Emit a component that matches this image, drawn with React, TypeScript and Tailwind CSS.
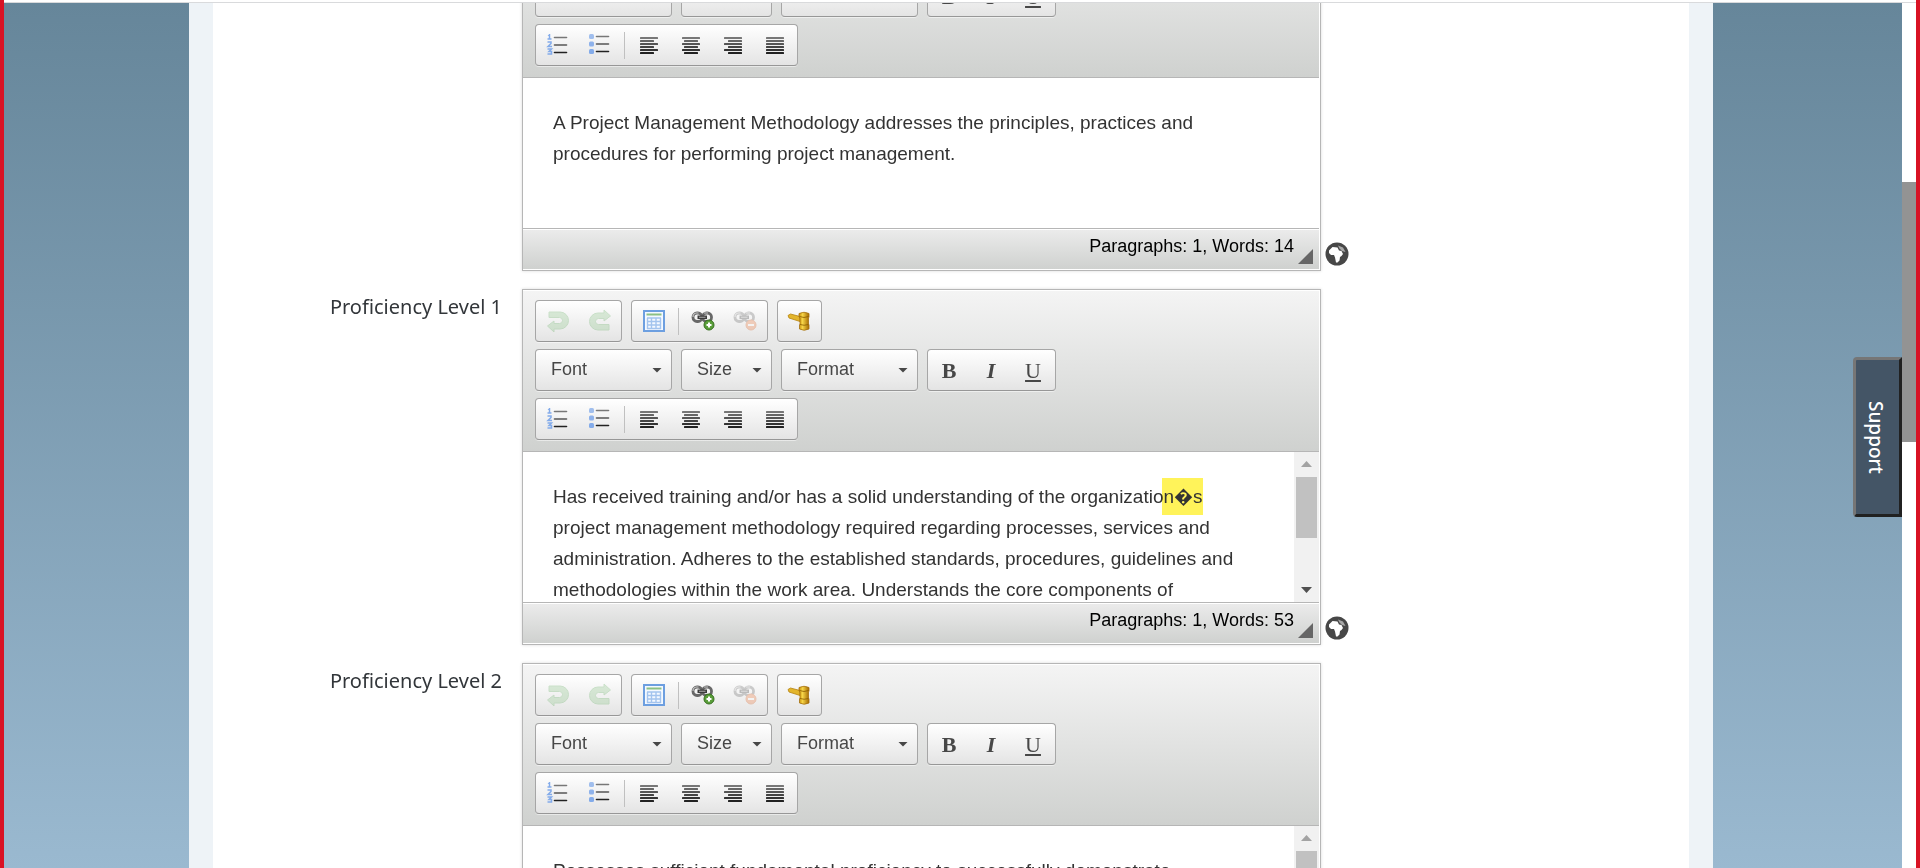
import React from 'react';

const GROUP = 'flex h-[42px] items-center rounded-[4px] border border-[#a6a6a6] border-b-[#979797] bg-gradient-to-b from-white to-[#e4e4e4] shadow-[0_1px_0_rgba(255,255,255,0.5)]';
const TRACK = 'relative flex w-[25px] shrink-0 flex-col items-center justify-between bg-[#f1f1f1] py-[9px]';

interface EditorProps {
  id: string;
  label?: string;
  words?: number;
  scroll?: boolean;
  children: React.ReactNode;
}

function ToolButton({ label, disabled, children }: { label: string; disabled?: boolean; children: React.ReactNode }) {
  return (
    <button type="button" aria-label={label} disabled={disabled} className="flex h-10 w-[42px] items-center justify-center disabled:opacity-30">
      {children}
    </button>
  );
}

function Separator() {
  return <span className="mx-[3px] h-[27px] w-px bg-[#c0c0c0]" />;
}

function Combo({ label, id, wide }: { label: string; id: string; wide?: boolean }) {
  return (
    <div className={`relative ${wide ? 'w-[137px]' : 'w-[91px]'}`}>
      <select
        id={id}
        aria-label={label}
        className="h-[42px] w-full appearance-none rounded-[4px] border border-[#a6a6a6] border-b-[#979797] bg-gradient-to-b from-white to-[#e4e4e4] pb-px pl-[15px] text-[18px] text-[#474747] shadow-[0_1px_0_rgba(255,255,255,0.5)]"
      >
        <option>{label}</option>
      </select>
      <svg className="pointer-events-none absolute right-[10px] top-[19px]" width="10" height="5" viewBox="0 0 10 5">
        <path d="M0.5 0h9L5 4.6z" fill="#474747" />
      </svg>
    </div>
  );
}

function UndoIcon({ flip }: { flip?: boolean }) {
  return (
    <svg width="24" height="24" viewBox="0 0 24 24">
      <g transform={flip ? 'translate(24 24) scale(-1 -1)' : undefined}>
        <path
          d={flip ? 'M3 21h11a8.500 8.500 0 0 0 0-17H8V1L1.500 7 8 12V9.500h5.500a3 3 0 0 1 0 6H3z' : 'M3 3h11a8.500 8.500 0 0 1 0 17H8v3l-6.500-6L8 12v2.500h5.500a3 3 0 0 0 0-6H3z'}
          transform={flip ? 'translate(0 24) scale(1 -1)' : undefined}
          fill="#8cc588"
          stroke="#62ab60"
        />
      </g>
    </svg>
  );
}

function TableIcon() {
  return (
    <svg width="24" height="24" viewBox="0 0 24 24">
      <rect x="2" y="2" width="20" height="20" fill="#f4f9ff" stroke="#6d9fe0" strokeWidth="2" />
      <path d="M4.500 5.500h15" stroke="#8cc084" strokeWidth="2" />
      <path d="M5 9h14M5 12.500h14M5 16h14M5 19.500h14M5.500 9v11M9.500 9v11M14 9v11M18.500 9v11" stroke="#a3c4ee" strokeWidth="1.400" fill="none" />
    </svg>
  );
}

function LinkIcon({ remove }: { remove?: boolean }) {
  return (
    <svg width="24" height="24" viewBox="0 0 24 24">
      <rect x="2" y="4" width="9" height="8.500" rx="4" fill="none" stroke="#686868" strokeWidth="2.800" />
      <rect x="11.500" y="4" width="9" height="8.500" rx="4" fill="none" stroke="#686868" strokeWidth="2.800" />
      <path d="M2 8a4 4 0 0 1 3.500-4h2M13 4h4" stroke="#c4c4c4" strokeWidth="1.200" fill="none" />
      <path d="M6.500 8.300h9.500" stroke="#3c3c3c" strokeWidth="3.600" />
      <path d="M8 8.300h6.500" stroke="#9a9a9a" strokeWidth="1.200" />
      <circle cx="18" cy="16" r="5" fill={remove ? '#ee7a3d' : '#5a9e3a'} stroke={remove ? '#d45a1c' : '#356f1e'} />
      <path d={remove ? 'M15 16h6' : 'M15.500 16h5M18 13.500v5'} stroke="#fff" strokeWidth="2" />
    </svg>
  );
}

function GavelIcon() {
  return (
    <svg width="24" height="24" viewBox="0 0 24 24">
      <defs>
        <linearGradient id="gavel" x1="0" x2="1">
          <stop offset="0" stopColor="#c98f08" />
          <stop offset="0.35" stopColor="#f6d548" />
          <stop offset="1" stopColor="#a56a00" />
        </linearGradient>
      </defs>
      <path d="M1 6.500L3.500 5l9.500 2.500v5L2 9z" fill="#e3b52c" stroke="#b58310" strokeWidth="0.800" />
      <path d="M12 4.500q5-2.500 10 0V8l-.5 1v6l.5 1v4q-5 2.500-9.500 0v-4l.5-1V9l-1-1z" fill="url(#gavel)" stroke="#a57010" strokeWidth="0.800" />
      <path d="M12.500 7.500q4.500 2 9 0M13 15.500q4 1.500 8.500 0" stroke="#8a5a00" strokeWidth="0.800" fill="none" />
    </svg>
  );
}

function ListIcon({ numbered }: { numbered?: boolean }) {
  return (
    <svg width="24" height="24" viewBox="0 0 24 24">
      {numbered ? (
        <path d="M3.500 1v5M2 2.500l1.500-1M1.500 6h4M1.500 9h3.500v1.500L2 13.500h4M1.500 16h4L3 18.500h2.500v2.500h-4" fill="none" stroke="#83abea" strokeWidth="1.500" />
      ) : (
        <g fill="#83abea">
          <rect x="1" y="1" width="5" height="5" rx="1.500" opacity=".75" />
          <rect x="1" y="8.500" width="5" height="5" rx="1.500" opacity=".9" />
          <rect x="1" y="16" width="5" height="5" rx="1.500" />
        </g>
      )}
      <g transform={numbered ? 'translate(0 1)' : undefined} strokeWidth="1.600" strokeLinecap="round">
        <path d="M8.500 3.500h12" stroke="#777" />
        <path d="M8.500 11h12" stroke="#555" />
        <path d="M8.500 18.500h12" stroke="#222" />
      </g>
    </svg>
  );
}

const SHADES = ['#777', '#666', '#555', '#444', '#333', '#222'];

function AlignIcon({ align }: { align: 'left' | 'center' | 'right' | 'justify' }) {
  return (
    <svg width="24" height="24" viewBox="0 0 24 24">
      {SHADES.map((shade, i) => {
        const width = align === 'justify' || i % 2 === 0 ? 18 : 14;
        const x = align === 'right' ? 21 - width : align === 'center' ? 12 - width / 2 : 3;
        return <rect key={shade} x={x} y={4 + i * 3} width={width} height="2" rx=".5" fill={shade} />;
      })}
    </svg>
  );
}

function GlobeIcon() {
  return (
    <svg width="24" height="24" viewBox="0 0 24 24">
      <circle cx="12" cy="12" r="11.500" fill="#474747" />
      <path d="M4 8.500L7.500 5l5 .500 1.500 3 2.500.500L18 12l-1.500 2-1.500 1-.5 3.500-2 2h-1.500L10 15.500 9 13H6l-2-2z" fill="#fff" />
      <path d="M13 3.500l5 2 2.500 4.500-3.500-1-2.500-2.500z" fill="#a9a9a9" />
    </svg>
  );
}

function Toolbar({ id }: { id: string }) {
  return (
    <div className="flex h-[161px] flex-col gap-[7px] border-t border-white bg-gradient-to-b from-[#f4f4f4] to-[#cfd1cf] pl-3 pt-[9px]">
      <div className="flex gap-[9px]">
        <div className={`${GROUP} pl-px`}>
          <ToolButton label="Undo" disabled><UndoIcon /></ToolButton>
          <ToolButton label="Redo" disabled><UndoIcon flip /></ToolButton>
        </div>
        <div className={`${GROUP} px-px`}>
          <ToolButton label="Table"><TableIcon /></ToolButton>
          <Separator />
          <ToolButton label="Link"><LinkIcon /></ToolButton>
          <ToolButton label="Unlink" disabled><LinkIcon remove /></ToolButton>
        </div>
        <div className={`${GROUP} pr-px`}>
          <ToolButton label="Legal scan"><GavelIcon /></ToolButton>
        </div>
      </div>
      <div className="flex gap-[9px]">
        <Combo id={`${id}-font`} label="Font" wide />
        <Combo id={`${id}-size`} label="Size" />
        <Combo id={`${id}-format`} label="Format" wide />
        <div className={`${GROUP} pr-px font-['Liberation_Serif',serif] text-[22px] text-[#474747]`}>
          <ToolButton label="Bold"><b>B</b></ToolButton>
          <ToolButton label="Italic"><b className="italic">I</b></ToolButton>
          <ToolButton label="Underline"><span className="underline decoration-2 underline-offset-2">U</span></ToolButton>
        </div>
      </div>
      <div className="flex">
        <div className={`${GROUP} px-px`}>
          <ToolButton label="Numbered list"><ListIcon numbered /></ToolButton>
          <ToolButton label="Bulleted list"><ListIcon /></ToolButton>
          <Separator />
          <ToolButton label="Align left"><AlignIcon align="left" /></ToolButton>
          <ToolButton label="Center"><AlignIcon align="center" /></ToolButton>
          <ToolButton label="Align right"><AlignIcon align="right" /></ToolButton>
          <ToolButton label="Justify"><AlignIcon align="justify" /></ToolButton>
        </div>
      </div>
    </div>
  );
}

function EditorRow({ id, label, words, scroll, children }: EditorProps) {
  return (
    <div className="flex">
      <span id={`${id}-label`} className="w-[289px] shrink-0 pt-1 text-right font-['Noto_Sans',sans-serif] text-[20px] leading-[28px] text-[#32363a]">
        {label}
      </span>
      <div className="ml-5 w-full max-w-[799px] border border-[#b6b6b6] bg-white pr-px shadow-[0_0_3px_rgba(0,0,0,0.15)]">
        <Toolbar id={id} />
        <div className="flex h-[152px] overflow-hidden border-y border-[#b6b6b6]">
          <div
            role="textbox"
            aria-multiline="true"
            aria-labelledby={label ? `${id}-label` : undefined}
            aria-label={label ? undefined : 'Description'}
            contentEditable
            suppressContentEditableWarning
            className="flex-1 px-[30px] pt-[29px] text-[19px] leading-[31px] text-[#333] outline-none"
          >
            {children}
          </div>
          {scroll && (
            <div className={TRACK}>
              <svg width="11" height="6" viewBox="0 0 11 6"><path d="M5.500 0L11 6H0z" fill="#a3a3a3" /></svg>
              <div className="absolute top-[25px] h-[61px] w-[21px] bg-[#c1c1c1]" />
              <svg width="11" height="6" viewBox="0 0 11 6"><path d="M0 0h11L5.500 6z" fill="#505050" /></svg>
            </div>
          )}
        </div>
        <div className="flex h-[41px] justify-end border-y border-white bg-gradient-to-b from-[#ebebeb] to-[#cfd1cf] pr-[6px]">
          <span className="pt-1 text-[18px] leading-6 text-black">Paragraphs: 1, Words: {words}</span>
          <svg className="ml-1 mt-[19px]" width="15" height="15" viewBox="0 0 15 15"><path d="M15 0v15H0z" fill="#666" /></svg>
        </div>
      </div>
      <button type="button" aria-label="Translations" className="mb-[5px] ml-1 shrink-0 self-end"><GlobeIcon /></button>
    </div>
  );
}

export default function App() {
  return (
    <div className="flex h-screen flex-col overflow-hidden border-x-4 border-[#d91224] bg-white font-['Liberation_Sans',Arial,sans-serif]">
      <div className="h-[3px] shrink-0 border-b border-[#d9dadc]" />
      <div className="flex min-h-0 flex-1">
        <div className="relative flex-1 bg-gradient-to-b from-[#66869a] to-[#9ab9d0] pl-[185px] pr-[189px]">
          <main className="h-full overflow-hidden border-x-[24px] border-[#eef3f7] bg-white">
            <div className="-mt-[88px] flex flex-col gap-[18px]">
              <EditorRow id="description" words={14}>
                A Project Management Methodology addresses the principles, practices and procedures for performing project management.
              </EditorRow>
              <EditorRow id="level-1" label="Proficiency Level 1" words={53} scroll>
                Has received training and/or has a solid understanding of the organizatio<mark className="-ml-0.5 bg-[#fff35a] py-2 pl-0.5 text-[#333] mix-blend-multiply">n�s</mark> project
                management methodology required regarding processes, services and administration. Adheres to the
                established standards, procedures, guidelines and methodologies within the work area. Understands the core components of
              </EditorRow>
              <EditorRow id="level-2" label="Proficiency Level 2" scroll>
                Possesses sufficient fundamental proficiency to successfully demonstrate
              </EditorRow>
            </div>
          </main>
          <button
            type="button"
            className="absolute right-0 top-[354px] flex h-40 w-[49px] items-center justify-center rounded-l-[4px] border-[3px] border-b-[#212121] border-l-[#767676] border-r-[#212121] border-t-[#767676] bg-[#445566] pr-1 font-['Noto_Sans',sans-serif] text-[19px] font-medium text-white [writing-mode:vertical-rl]"
          >
            Support
          </button>
        </div>
        <div className="w-[14px] shrink-0 pt-[179px]">
          <div className="h-[260px] bg-[#939393]" />
        </div>
      </div>
    </div>
  );
}
